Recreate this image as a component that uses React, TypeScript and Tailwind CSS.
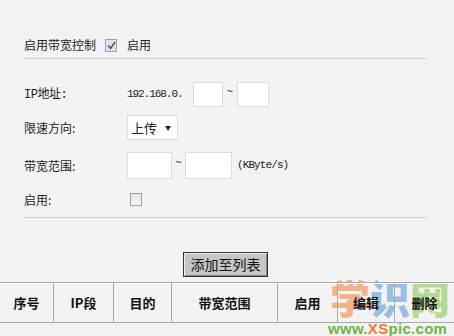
import React from "react";

const cjk = "font-['SimSun','Noto_Sans_CJK_SC',sans-serif]";
const mono = "font-['Liberation_Mono','Noto_Sans_CJK_SC',monospace]";

function Checkbox({ checked }: { checked?: boolean }) {
  return (
    <div
      className={`w-[12px] h-[13px] border border-[#9aa0a8] flex items-center justify-center ${
        checked ? "bg-[#dfe3ea]" : "bg-gradient-to-b from-[#e4e4e4] to-[#f8f8f8]"
      }`}
    >
      {checked && (
        <svg width="9" height="9" viewBox="0 0 9 9">
          <path d="M1 4.5 L3.5 7.5 L8 1" fill="none" stroke="#4a5570" strokeWidth="1.6" />
        </svg>
      )}
    </div>
  );
}

function Input({ w }: { w: string }) {
  return <div className={`${w} h-full bg-white border border-[#dcdcdc]`} />;
}

export default function App() {
  const cols = [
    { w: "w-[54px]", t: "序号" },
    { w: "w-[60px]", t: "IP段" },
    { w: "w-[58px]", t: "目的" },
    { w: "w-[106px]", t: "带宽范围" },
    { w: "w-[60px]", t: "启用" },
    { w: "w-[57px]", t: "编辑" },
    { w: "flex-1", t: "删除" },
  ];
  return (
    <div className={`relative w-[454px] h-[336px] bg-[#f3f3f3] overflow-hidden text-[12px] text-[#222] ${cjk}`}>
      <div className="pl-[24px] pr-[27px] pt-[32px]">
        <div className="h-[27px] flex items-center border-b border-[#cfcfcf]">
          <span className="w-[81px]">启用带宽控制</span>
          <Checkbox checked />
          <span className="ml-[10px]">启用</span>
        </div>

        <div className="mt-[23px] h-[25px] flex items-center">
          <span className={`w-[103px] ${mono} text-[12px] tracking-[-0.5px]`}>IP地址:</span>
          <span className={`w-[66px] ${mono} text-[11px] tracking-[-1.05px]`}>192.168.0.</span>
          <Input w="w-[30px]" />
          <span className="w-[14px] text-center text-[11px] -mt-[8px]">~</span>
          <Input w="w-[32px]" />
        </div>

        <div className="mt-[8px] h-[25px] flex items-center">
          <span className="w-[103px]">限速方向:</span>
          <div className="w-[51px] h-full bg-white border border-[#dcdcdc] flex items-center pl-[3px] pr-[6px]">
            <span className="text-[13px]">上传</span>
            <span className="ml-auto text-[6px] leading-none">▼</span>
          </div>
        </div>

        <div className="mt-[12px] h-[27px] flex items-center">
          <span className="w-[103px]">带宽范围:</span>
          <Input w="w-[45px]" />
          <span className="w-[13px] text-center text-[11px] -mt-[8px]">~</span>
          <Input w="w-[47px]" />
          <span className={`ml-[5px] ${mono} text-[11px] tracking-[-0.9px]`}>(KByte/s)</span>
        </div>

        <div className="mt-[12px] h-[17px] flex items-center">
          <span className="w-[106px]">启用:</span>
          <Checkbox />
        </div>

        <div className="h-[10px] border-b border-[#cfcfcf]" />
      </div>

      <div className="mt-[34px] pl-[183px]">
        <button className="w-[85px] h-[25px] bg-[#c6c6c6] border border-[#333] shadow-[inset_1px_1px_0_#f0f0f0,inset_-1px_-1px_0_#888] text-[14px] text-[#111] flex items-center justify-center">
          添加至列表
        </button>
      </div>

      <div className="absolute left-[330px] top-[277px] flex items-end font-['Noto_Sans_CJK_SC',sans-serif] font-black text-[40px] leading-none opacity-60">
        <span className="text-[#f08a40]">学</span>
        <span className="text-[#5d9bd8]">识</span>
        <span className="text-[#8cc84f]">网</span>
      </div>

      <div className="relative mt-[5px] h-[41px] flex border-t border-b border-[#a8a8a8] shadow-[inset_0_1px_0_#fff]">
        {cols.map((c, i) => (
          <div
            key={i}
            className={`${c.w} flex items-center justify-center font-bold text-[13px] text-[#111] ${
              i < cols.length - 1 ? "border-r border-[#a8a8a8]" : ""
            }`}
          >
            {c.t}
          </div>
        ))}
      </div>

      <div className="absolute left-[328px] top-[321px] font-['Liberation_Sans',sans-serif] font-bold text-[15px] leading-none tracking-[0.3px]">
        <span className="text-[#6fb43f]">www.</span>
        <span className="text-[#ee7a35]">XS</span>
        <span className="text-[#6fb43f]">pic.com</span>
      </div>
    </div>
  );
}
